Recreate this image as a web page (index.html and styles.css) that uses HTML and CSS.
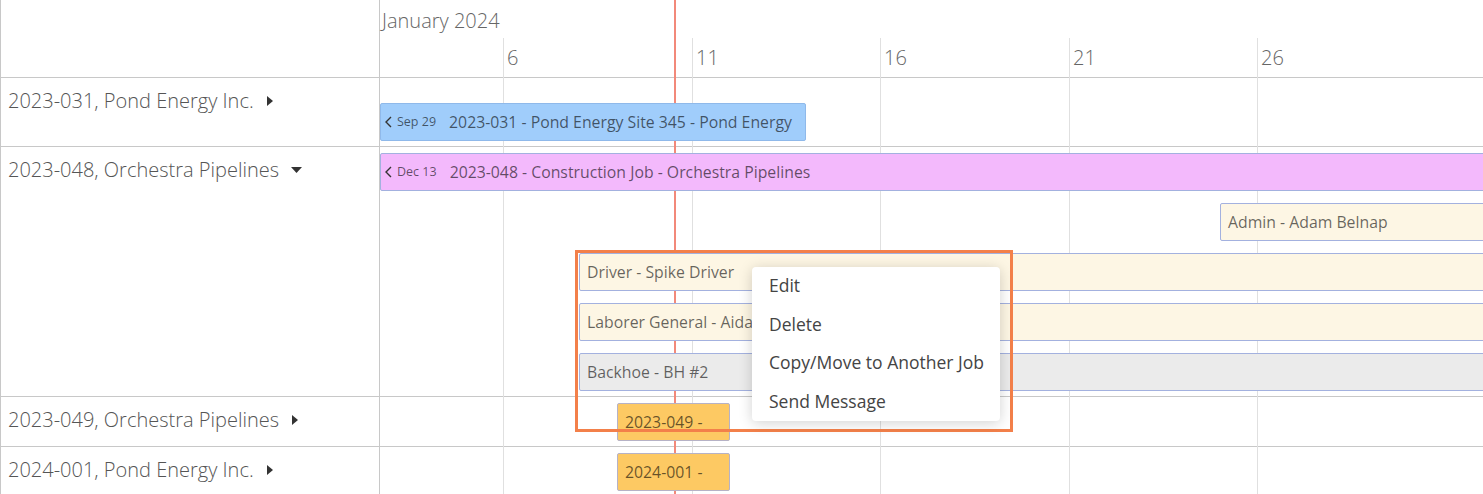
FILE: index.html
```html
<!DOCTYPE html>
<html>
<head>
<meta charset="utf-8">
<link rel="stylesheet" href="styles.css">
</head>
<body>
<div class="gantt">
  <div class="gridlines">
    <div class="vline" style="left:503px"></div>
    <div class="vline" style="left:692px"></div>
    <div class="vline" style="left:880px"></div>
    <div class="vline" style="left:1069px"></div>
    <div class="vline" style="left:1257px"></div>
  </div>
  <div class="today"></div>

  <div class="label head-label"></div>
  <div class="lane head-lane">
    <div class="month">January 2024</div>
    <div class="days">
      <span class="day" style="left:123px">6</span>
      <span class="day" style="left:312px">11</span>
      <span class="day" style="left:500px">16</span>
      <span class="day" style="left:689px">21</span>
      <span class="day" style="left:877px">26</span>
    </div>
  </div>

  <div class="label">2023-031, Pond Energy Inc.<svg class="caret right" viewBox="0 0 6 10"><path d="M0 0 L6 5 L0 10 Z"/></svg></div>
  <div class="lane lane-first">
    <div class="bar blue" style="margin-left:0;width:426px"><svg class="chev" viewBox="0 0 7 12"><path d="M6 1 L1 6 L6 11"/></svg><span class="since">Sep 29</span>2023-031 - Pond Energy Site 345 - Pond Energy</div>
  </div>

  <div class="label">2023-048, Orchestra Pipelines<svg class="caret down" viewBox="0 0 11 6"><path d="M0 0 L11 0 L5.5 6 Z"/></svg></div>
  <div class="lane">
    <div class="bar pink" style="margin-left:0;width:1200px"><svg class="chev" viewBox="0 0 7 12"><path d="M6 1 L1 6 L6 11"/></svg><span class="since">Dec 13</span>2023-048 - Construction Job - Orchestra Pipelines</div>
    <div class="bar cream" style="margin-left:840px;width:600px">Admin - Adam Belnap</div>
    <div class="bar cream" style="margin-left:199px;width:1000px">Driver - Spike Driver</div>
    <div class="bar cream" style="margin-left:199px;width:1000px">Laborer General - Aidan</div>
    <div class="bar grey" style="margin-left:199px;width:1000px">Backhoe - BH #2</div>
  </div>

  <div class="label">2023-049, Orchestra Pipelines<svg class="caret right" viewBox="0 0 6 10"><path d="M0 0 L6 5 L0 10 Z"/></svg></div>
  <div class="lane">
    <div class="bar orange" style="margin-left:237px;width:113px">2023-049 -</div>
  </div>

  <div class="label">2024-001, Pond Energy Inc.<svg class="caret right" viewBox="0 0 6 10"><path d="M0 0 L6 5 L0 10 Z"/></svg></div>
  <div class="lane">
    <div class="bar orange" style="margin-left:237px;width:113px">2024-001 -</div>
  </div>

  <div class="selection"></div>
  <ul class="menu">
    <li>Edit</li>
    <li>Delete</li>
    <li>Copy/Move to Another Job</li>
    <li>Send Message</li>
  </ul>
</div>
</body>
</html>
```
FILE: styles.css
```css
* { box-sizing: border-box; }
html, body { margin: 0; padding: 0; background: #fff; }
body {
  font-family: "Open Sans", "Liberation Sans", sans-serif;
  width: 1483px;
  height: 494px;
  overflow: hidden;
}

.gantt {
  position: relative;
  display: grid;
  grid-template-columns: 380px 1103px;
  grid-auto-rows: auto;
  overflow: hidden;
}

.gridlines {
  position: absolute;
  left: 0; right: 0; top: 38px; bottom: 0;
  z-index: 0;
}
.vline {
  position: absolute;
  top: 0; bottom: 0;
  width: 1px;
  background: #e0e0e0;
}
.today {
  position: absolute;
  left: 674px; top: 0; bottom: 0;
  width: 2px;
  background: #f2897a;
  z-index: 1;
}

.label {
  border-left: 1px solid #c8c8c8;
  border-right: 1px solid #c8c8c8;
  border-bottom: 1px solid #c8c8c8;
  padding: 10px 0 0 7px;
  font-size: 20px;
  font-weight: 300;
  color: #555;
  line-height: 26px;
  display: flex;
  align-items: flex-start;
}
.head-label { height: 78px; }

.caret { fill: #333; margin-left: 13px; margin-top: 8px; flex: none; }
.caret.right { width: 6px; height: 10px; }
.caret.down { width: 11px; height: 6px; margin-left: 12px; margin-top: 10px; }

.lane {
  border-bottom: 1px solid #c8c8c8;
  padding: 6px 0 5px 0;
  display: flex;
  flex-direction: column;
  gap: 12px;
  min-width: 0;
}
.lane-first { padding-top: 25px; }

.head-lane { padding: 0; gap: 0; height: 78px; }
.month {
  height: 38px;
  padding: 8px 0 0 2px;
  font-size: 20px;
  font-weight: 300;
  color: #666;
  line-height: 26px;
}
.days { position: relative; height: 39px; }
.day {
  position: absolute;
  top: 7px;
  padding-left: 4px;
  font-size: 20px;
  font-weight: 300;
  color: #666;
  line-height: 26px;
}

.bar {
  position: relative;
  z-index: 2;
  flex: none;
  height: 38px;
  border: 1px solid #a3b1df;
  border-radius: 2px;
  padding: 0 7px;
  font-size: 15.8px;
  line-height: 36px;
  color: rgba(0, 0, 0, 0.6);
  white-space: nowrap;
  overflow: hidden;
  display: flex;
  align-items: center;
}
.blue { background: #a0cdfb; border-color: #8fb9ea; padding-left: 4px; }
.pink { background: #f3b9fc; padding-left: 4px; }
.cream { background: #fdf6e4; }
.grey { background: #ebebeb; }
.orange { background: #fdc963; border-color: #b6b2c6; }

.chev {
  width: 7px; height: 12px;
  fill: none; stroke: #333; stroke-width: 1.4;
  margin-right: 5px;
  flex: none;
}
.since { font-size: 12.5px; margin-right: 13px; }

.selection {
  position: absolute;
  left: 575px; top: 250px;
  width: 438px; height: 182px;
  border: 3px solid #f3804a;
  z-index: 3;
}

.menu {
  position: absolute;
  left: 752px; top: 267px;
  width: 248px;
  margin: 0; padding: 0;
  list-style: none;
  background: #fff;
  border-radius: 4px;
  box-shadow: 0 2px 14px rgba(0, 0, 0, 0.18);
  z-index: 4;
}
.menu li {
  height: 38.5px;
  padding-left: 17px;
  font-size: 17.5px;
  line-height: 36px;
  color: #444;
}
```
